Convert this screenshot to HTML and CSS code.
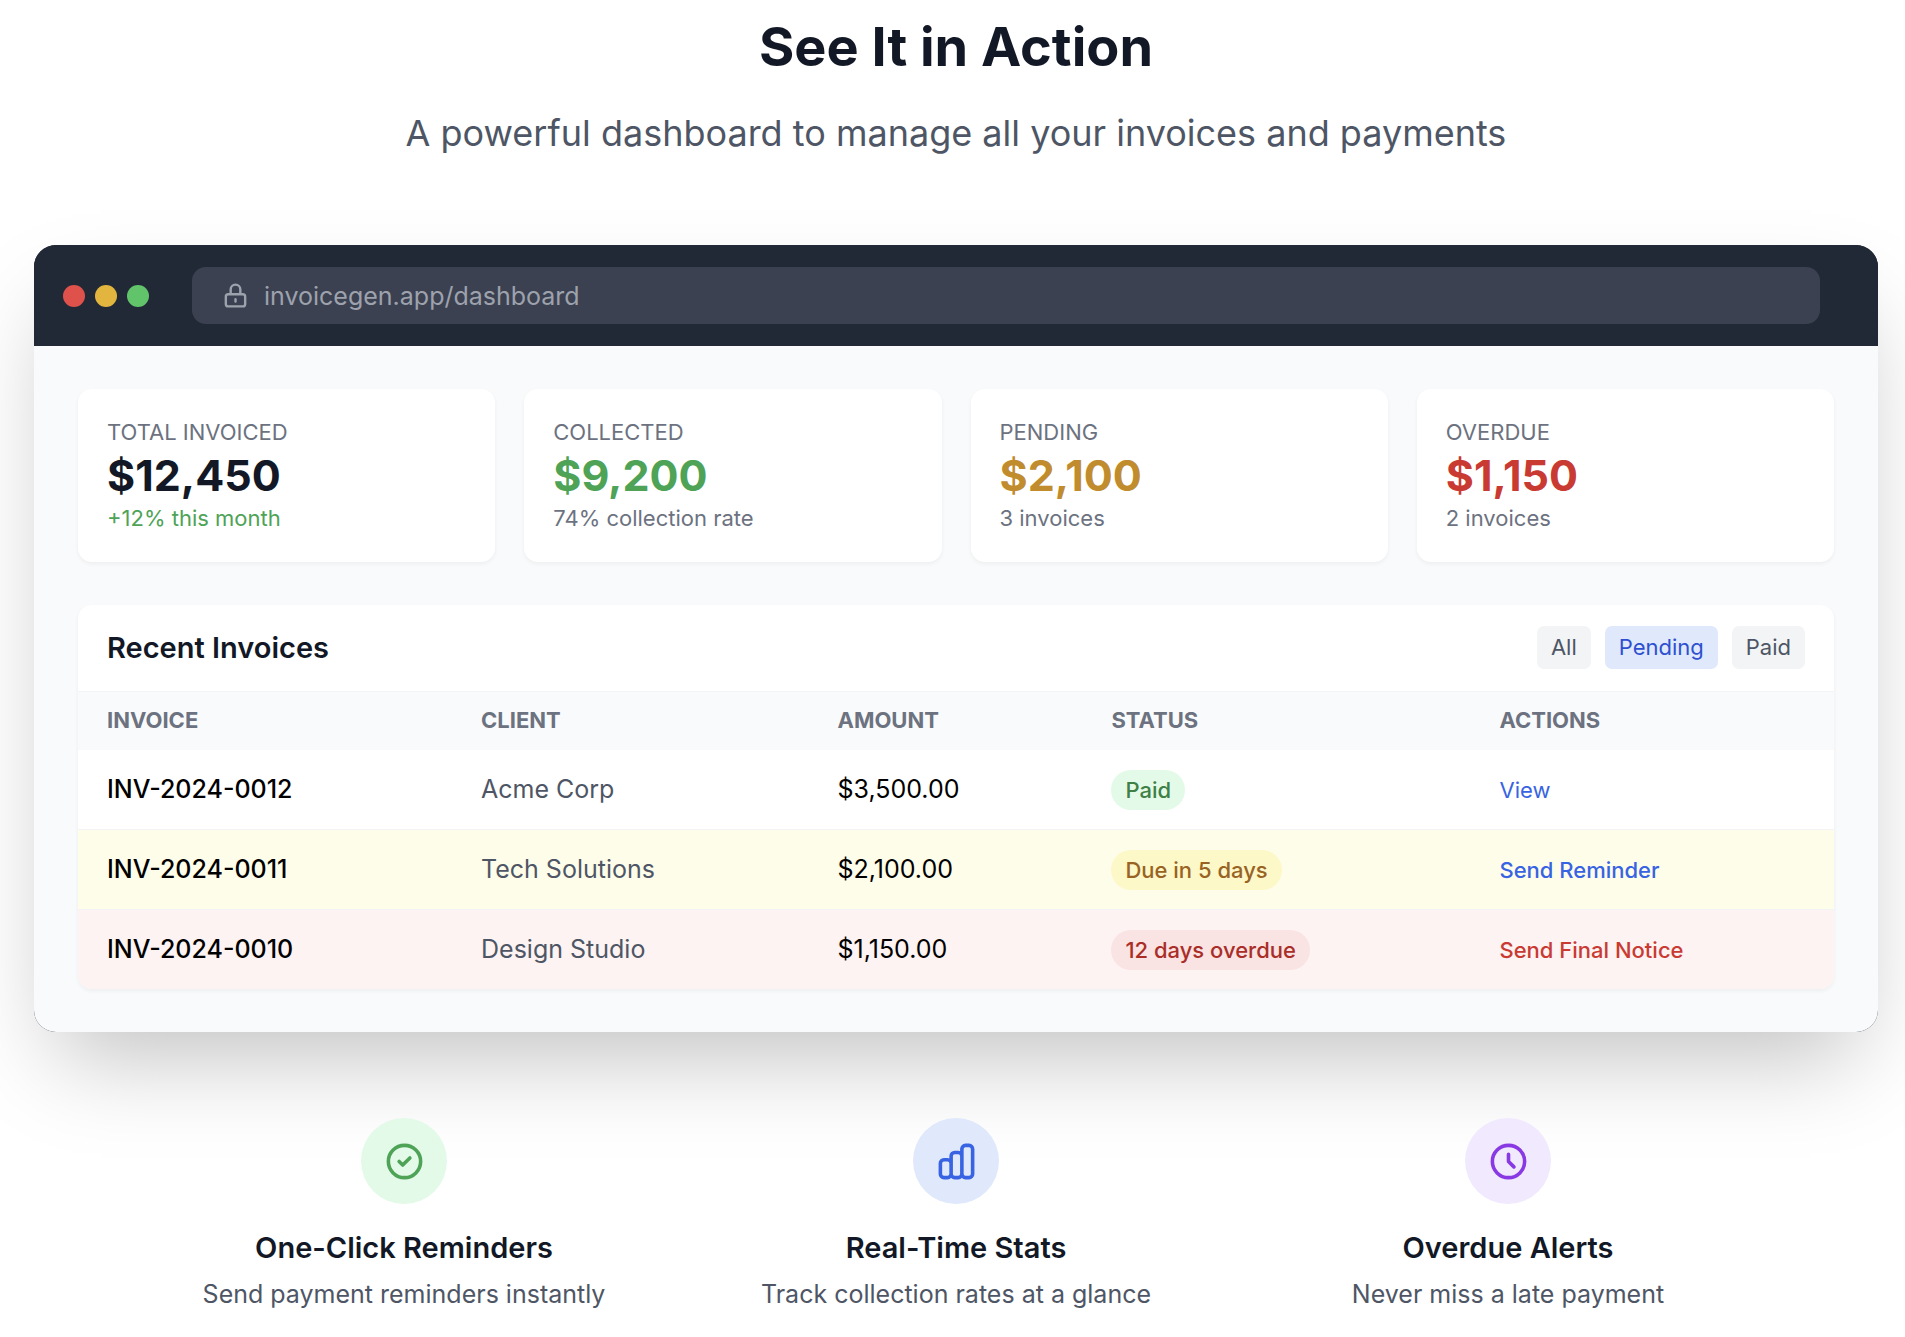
FILE: index.html
```html
<!DOCTYPE html>
<html lang="en">
<head>
  <meta charset="UTF-8" />
  <meta name="viewport" content="width=device-width, initial-scale=1.0" />
  <title>See It in Action</title>
  <link rel="stylesheet" href="styles.css">
</head>
<body>

<section class="demo">
  <div class="demo-header">
    <h2>See It in Action</h2>
    <p>A powerful dashboard to manage all your invoices and payments</p>
  </div>

  <!-- Browser window -->
  <div class="window">
    <div class="window-bar">
      <div class="dots">
        <span class="dot red"></span>
        <span class="dot yellow"></span>
        <span class="dot green"></span>
      </div>
      <div class="address">
        <svg class="lock" viewBox="0 0 24 24" fill="none" stroke="currentColor" stroke-width="2" stroke-linecap="round" stroke-linejoin="round"><path d="M12 15v2m-6 4h12a2 2 0 002-2v-6a2 2 0 00-2-2H6a2 2 0 00-2 2v6a2 2 0 002 2zm10-10V7a4 4 0 00-8 0v4h8z"/></svg>
        <input type="text" class="address-input" aria-label="Address" value="invoicegen.app/dashboard" readonly>
      </div>
    </div>

    <div class="dashboard">
      <div class="stats">
        <div class="card stat">
          <div class="stat-label">TOTAL INVOICED</div>
          <div class="stat-value">$12,450</div>
          <div class="stat-note up">+12% this month</div>
        </div>
        <div class="card stat">
          <div class="stat-label">COLLECTED</div>
          <div class="stat-value collected">$9,200</div>
          <div class="stat-note">74% collection rate</div>
        </div>
        <div class="card stat">
          <div class="stat-label">PENDING</div>
          <div class="stat-value pending">$2,100</div>
          <div class="stat-note">3 invoices</div>
        </div>
        <div class="card stat">
          <div class="stat-label">OVERDUE</div>
          <div class="stat-value overdue">$1,150</div>
          <div class="stat-note">2 invoices</div>
        </div>
      </div>

      <div class="card invoices">
        <div class="invoices-header">
          <h3>Recent Invoices</h3>
          <div class="filters">
            <button type="button" class="filter">All</button>
            <button type="button" class="filter active">Pending</button>
            <button type="button" class="filter">Paid</button>
          </div>
        </div>
        <table>
          <colgroup>
            <col class="col-invoice">
            <col class="col-client">
            <col class="col-amount">
            <col class="col-status">
            <col>
          </colgroup>
          <thead>
            <tr>
              <th>INVOICE</th>
              <th>CLIENT</th>
              <th>AMOUNT</th>
              <th>STATUS</th>
              <th>ACTIONS</th>
            </tr>
          </thead>
          <tbody>
            <tr>
              <td class="number">INV-2024-0012</td>
              <td class="client">Acme Corp</td>
              <td>$3,500.00</td>
              <td><span class="badge paid">Paid</span></td>
              <td><a href="#" class="action">View</a></td>
            </tr>
            <tr class="row-due">
              <td class="number">INV-2024-0011</td>
              <td class="client">Tech Solutions</td>
              <td>$2,100.00</td>
              <td><span class="badge due">Due in 5 days</span></td>
              <td><a href="#" class="action strong">Send Reminder</a></td>
            </tr>
            <tr class="row-late">
              <td class="number">INV-2024-0010</td>
              <td class="client">Design Studio</td>
              <td>$1,150.00</td>
              <td><span class="badge late">12 days overdue</span></td>
              <td><a href="#" class="action strong danger">Send Final Notice</a></td>
            </tr>
          </tbody>
        </table>
      </div>
    </div>
  </div>

  <!-- Features -->
  <div class="features">
    <div class="feature">
      <div class="feature-icon green">
        <svg viewBox="0 0 24 24" fill="none" stroke="currentColor" stroke-width="2" stroke-linecap="round" stroke-linejoin="round"><path d="M9 12l2 2 4-4m6 2a9 9 0 11-18 0 9 9 0 0118 0z"/></svg>
      </div>
      <h4>One-Click Reminders</h4>
      <p>Send payment reminders instantly</p>
    </div>
    <div class="feature">
      <div class="feature-icon blue">
        <svg viewBox="0 0 24 24" fill="none" stroke="currentColor" stroke-width="2" stroke-linecap="round" stroke-linejoin="round"><path d="M9 19v-6a2 2 0 00-2-2H5a2 2 0 00-2 2v6a2 2 0 002 2h2a2 2 0 002-2zm0 0V9a2 2 0 012-2h2a2 2 0 012 2v10m-6 0a2 2 0 002 2h2a2 2 0 002-2m0 0V5a2 2 0 012-2h2a2 2 0 012 2v14a2 2 0 01-2 2h-2a2 2 0 01-2-2z"/></svg>
      </div>
      <h4>Real-Time Stats</h4>
      <p>Track collection rates at a glance</p>
    </div>
    <div class="feature">
      <div class="feature-icon purple">
        <svg viewBox="0 0 24 24" fill="none" stroke="currentColor" stroke-width="2" stroke-linecap="round" stroke-linejoin="round"><path d="M12 8v4l3 3m6-3a9 9 0 11-18 0 9 9 0 0118 0z"/></svg>
      </div>
      <h4>Overdue Alerts</h4>
      <p>Never miss a late payment</p>
    </div>
  </div>
</section>

</body>
</html>
```
FILE: styles.css
```css
* {
  box-sizing: border-box;
}

body {
  margin: 0;
  font-family: Inter, "Liberation Sans", sans-serif;
  font-size: 25px;
  line-height: 36px;
  background: #fff;
  color: #000;
}

h2, h3, h4, p {
  margin: 0;
}

.demo {
  padding: 14px 27px 14px 34px;
}

.demo-header {
  text-align: center;
  margin-bottom: 86px;
}

.demo-header h2 {
  margin-bottom: 29px;
  font-size: 54px;
  line-height: 65px;
  font-weight: 700;
  color: #121826;
}

.demo-header p {
  font-size: 36px;
  line-height: 51px;
  color: #4e5665;
}

/* Browser window */
.window {
  border-radius: 22px;
  overflow: hidden;
  background: #121826;
  box-shadow: 0 45px 90px -22px rgba(0, 0, 0, 0.25);
}

.window-bar {
  display: flex;
  align-items: center;
  gap: 14px;
  padding: 22px 29px;
  background: #222936;
}

.dots {
  display: flex;
  gap: 10px;
}

.dot {
  width: 22px;
  height: 22px;
  border-radius: 50%;
}

.dot.red {
  background: #df524b;
}

.dot.yellow {
  background: #e2b53e;
}

.dot.green {
  background: #61c46b;
}

.address {
  flex: 1;
  display: flex;
  align-items: center;
  gap: 14px;
  height: 57px;
  margin: 0 29px;
  padding: 0 29px;
  border-radius: 14px;
  background: #3b4150;
  color: #9da2ad;
}

.lock {
  width: 29px;
  height: 29px;
}

.address-input {
  flex: 1;
  padding: 0;
  border: none;
  outline: none;
  background: none;
  color: inherit;
  font: inherit;
}

/* Dashboard */
.dashboard {
  padding: 43px 44px;
  background: #f9fafc;
}

.card {
  background: #fff;
  border-radius: 14px;
  box-shadow: 0 2px 4px rgba(0, 0, 0, 0.05);
}

.stats {
  display: grid;
  grid-template-columns: repeat(4, 1fr);
  gap: 29px;
  margin-bottom: 43px;
}

.stat {
  padding: 29px;
}

.stat-label,
.stat-note {
  font-size: 22px;
  line-height: 29px;
  color: #6c727f;
}

.stat-value {
  font-size: 43px;
  line-height: 57px;
  font-weight: 700;
  color: #121826;
}

.stat-value.collected,
.stat-note.up {
  color: #4ea357;
}

.stat-value.pending {
  color: #c08c2e;
}

.stat-value.overdue {
  color: #c93a32;
}

.invoices {
  overflow: hidden;
}

.invoices-header {
  display: flex;
  align-items: center;
  justify-content: space-between;
  padding: 21px 29px 22px;
  border-bottom: 1px solid #f3f4f6;
}

.invoices-header h3 {
  font-size: 29px;
  line-height: 43px;
  font-weight: 600;
  color: #121826;
}

.filters {
  display: flex;
  gap: 14px;
}

.filter {
  padding: 7px 14px;
  border: none;
  border-radius: 7px;
  background: #f3f4f6;
  color: #4e5665;
  font-family: inherit;
  font-size: 22px;
  line-height: 29px;
  cursor: pointer;
}

.filter.active {
  background: #dfe9fb;
  color: #2e50d0;
}

table {
  width: 100%;
  border-collapse: separate;
  border-spacing: 0;
  table-layout: fixed;
}

.col-invoice {
  width: 21.3%;
}

.col-client {
  width: 20.3%;
}

.col-amount {
  width: 15.6%;
}

.col-status {
  width: 22.1%;
}

th {
  padding: 14px 29px 15px;
  background: #f9fafc;
  color: #6c727f;
  font-size: 22px;
  line-height: 29px;
  font-weight: 700;
  text-align: left;
}

td {
  padding: 21px 29px 22px;
  white-space: nowrap;
}

tr + tr td {
  border-top: 1px solid #f3f4f6;
}

.row-due {
  background: #fefdea;
}

.row-late {
  background: #fcf3f2;
}

.number {
  font-weight: 500;
}

.client {
  color: #4e5665;
}

.badge {
  padding: 7px 14px;
  border-radius: 22px;
  font-size: 22px;
  line-height: 29px;
  font-weight: 500;
}

.badge.paid {
  background: #e3fae8;
  color: #3e8045;
}

.badge.due {
  background: #fdf8c8;
  color: #986323;
}

.badge.late {
  background: #f9e3e3;
  color: #aa2e28;
}

.action {
  color: #3863e2;
  font-size: 22px;
  line-height: 29px;
  text-decoration: none;
}

.action.strong {
  font-weight: 500;
}

.action.danger {
  color: #c93a32;
}

/* Features */
.features {
  display: grid;
  grid-template-columns: repeat(3, 1fr);
  gap: 43px;
  max-width: 1613px;
  margin: 86px auto 0;
  text-align: center;
}

.feature-icon {
  display: flex;
  align-items: center;
  justify-content: center;
  width: 86px;
  height: 86px;
  margin: 0 auto 22px;
  border-radius: 50%;
}

.feature-icon svg {
  width: 43px;
  height: 43px;
}

.feature-icon.green {
  background: #e3fae8;
  color: #4ea357;
}

.feature-icon.blue {
  background: #dfe9fb;
  color: #3863e2;
}

.feature-icon.purple {
  background: #f1e9fe;
  color: #8939e4;
}

.feature h4 {
  margin-bottom: 7px;
  font-size: 29px;
  line-height: 43px;
  font-weight: 600;
  color: #121826;
}

.feature p {
  color: #4e5665;
}
```
